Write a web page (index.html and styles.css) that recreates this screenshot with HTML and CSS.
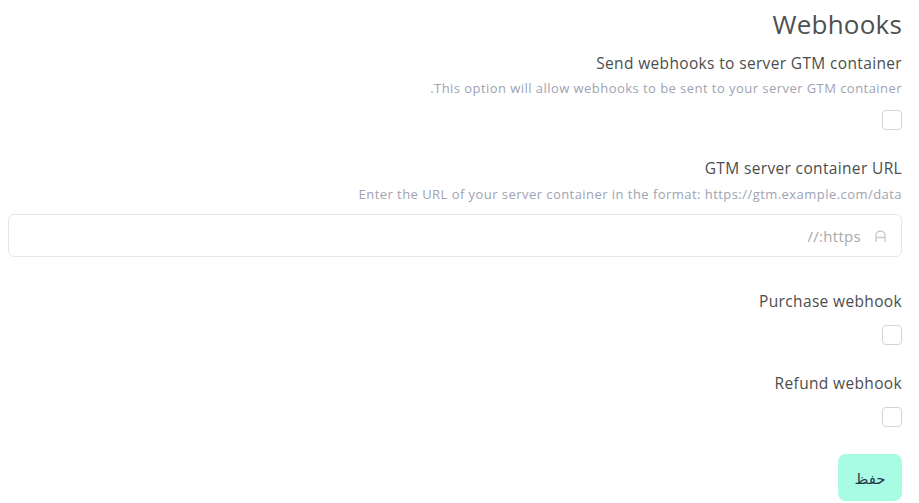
FILE: index.html
```html
<!DOCTYPE html>
<html lang="en" dir="rtl">
<head>
<meta charset="utf-8">
<title>Webhooks</title>
<link rel="stylesheet" href="styles.css">
</head>
<body>
<div class="page">
  <h1 class="title">Webhooks</h1>

  <div class="field field-first">
    <label class="label">Send webhooks to server GTM container</label>
    <p class="desc">This option will allow webhooks to be sent to your server GTM container.</p>
    <span class="check"></span>
  </div>

  <div class="field field-next">
    <label class="label">GTM server container URL</label>
    <p class="desc" dir="ltr">Enter the URL of your server container in the format: https://gtm.example.com/data</p>
    <div class="input">
      <svg class="input-icon" width="11" height="12" viewBox="0 0 11 12" fill="none" stroke="#c4c7ce" stroke-width="1.3">
        <path d="M1 12V5.5a4.5 4.5 0 0 1 9 0V12M1 7.5h9"/>
      </svg>
      <span class="placeholder">https://</span>
    </div>
  </div>

  <div class="field field-after-input">
    <label class="label">Purchase webhook</label>
    <span class="check"></span>
  </div>

  <div class="field field-next">
    <label class="label">Refund webhook</label>
    <span class="check"></span>
  </div>

  <button class="save">حفظ</button>
</div>
</body>
</html>
```

FILE: styles.css
```css
html, body {
  margin: 0;
  background: #ffffff;
}
body {
  font-family: "Open Sans", "Noto Sans", sans-serif;
  color: #4a4a4a;
}
.page {
  padding: 8px 17px 0 8px;
  display: flex;
  flex-direction: column;
  align-items: stretch;
}
.title {
  margin: 0;
  font-size: 26px;
  font-weight: 400;
  line-height: 32px;
  color: #505050;
  letter-spacing: 0.2px;
}
.field {
  display: flex;
  flex-direction: column;
  align-items: flex-start;
}
.field-first {
  margin-top: 13px;
}
.field-next {
  margin-top: 28px;
}
.field-after-input {
  margin-top: 34px;
}
.label {
  font-size: 15.5px;
  line-height: 20px;
  color: #4d4d4d;
  letter-spacing: 0.35px;
}
.desc {
  margin: 6px 0 0;
  font-size: 13px;
  line-height: 18px;
  color: #9ea3b2;
  letter-spacing: 0.45px;
}
.check {
  display: block;
  width: 18px;
  height: 18px;
  border: 1px solid #d3d3d3;
  border-radius: 4px;
  margin-top: 13px;
}
.field-after-input .check,
.field-next:not(:has(.desc)) .check {
  margin-top: 14px;
}
.field-next .desc {
  margin-top: 7px;
}
.input {
  align-self: stretch;
  margin-top: 11px;
  height: 41px;
  border: 1px solid #e6e6e6;
  border-radius: 6px;
  display: flex;
  align-items: center;
  padding: 0 15px;
  gap: 14px;
}
.input-icon {
  display: block;
}
.placeholder {
  font-size: 15px;
  color: #a9a9a9;
  letter-spacing: 0.3px;
}
.save {
  align-self: flex-start;
  margin-top: 27px;
  width: 64px;
  height: 47px;
  border: none;
  border-radius: 8px;
  background: #a8fce4;
  color: #1f3b4a;
  font-family: "Noto Sans", "DejaVu Sans", sans-serif;
  font-size: 15px;
  padding: 0;
}
```
